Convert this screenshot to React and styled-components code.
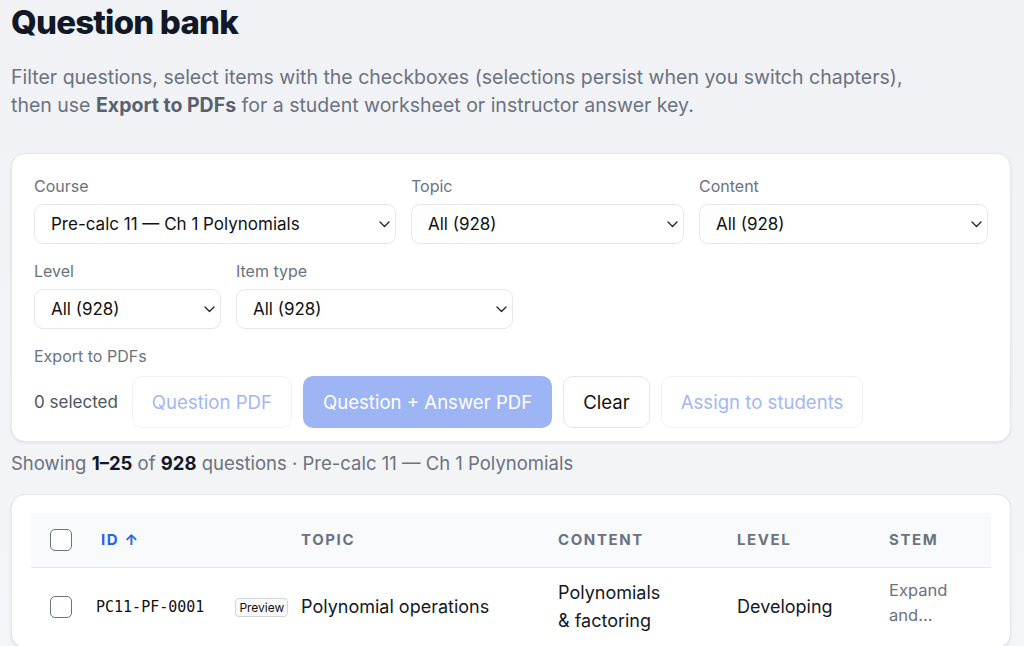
import React from "react";
import styled, { createGlobalStyle } from "styled-components";

const Global = createGlobalStyle`
  html, body { margin: 0; padding: 0; }
  body {
    background: linear-gradient(180deg, #f1f2f5 0%, #f4f5f7 100%);
    font-family: Inter, "Noto Sans", sans-serif;
    color: #111827;
    overflow: hidden;
    min-height: 646px;
  }
  * { box-sizing: border-box; }
`;

const Page = styled.div`
  padding: 0 13px 0 11px;
`;

const Title = styled.h1`
  margin: 0;
  padding-top: 2px;
  font-size: 33px;
  line-height: 40px;
  font-weight: 800;
  letter-spacing: -0.8px;
  color: #111827;
`;

const Intro = styled.p`
  margin: 21px 0 0;
  font-size: 19.5px;
  line-height: 28px;
  color: #6b7280;
  b { font-weight: 700; color: #596170; }
`;

const Card = styled.section`
  margin-top: ${(p) => p.$top || 0}px;
  background: #fff;
  border: 1px solid #e5e7eb;
  border-radius: 14px;
  box-shadow: 0 1px 3px rgba(17, 24, 39, 0.06), 0 1px 2px rgba(17, 24, 39, 0.03);
  padding: ${(p) => p.$pad};
`;

const FieldRow = styled.div`
  display: flex;
  gap: 15px;
  margin-bottom: 15px;
`;

const Field = styled.label`
  display: flex;
  flex-direction: column;
  gap: 6px;
  width: ${(p) => p.$w}px;
`;

const Label = styled.span`
  font-size: 16px;
  line-height: 24px;
  color: #6b7280;
`;

const SelectBox = styled.div`
  position: relative;
  height: 40px;
  border: 1px solid #e5e7eb;
  border-radius: 9px;
  background: #fff;
  display: flex;
  align-items: center;
  padding: 0 16px;
  font-size: 17px;
  color: #111;
`;

const Chevron = styled.svg`
  position: absolute;
  right: 5px;
  top: 50%;
  margin-top: -3px;
  width: 11px;
  height: 7px;
`;

const ExportRow = styled.div`
  display: flex;
  align-items: center;
  gap: 11px;
  margin-top: 8px;
`;

const Count = styled.span`
  font-size: 17px;
  color: #4b5563;
  margin-right: 3px;
`;

const Btn = styled.button`
  height: 52px;
  padding: 0 19px;
  border-radius: 10px;
  font-family: inherit;
  font-size: 18.6px;
  cursor: pointer;
  border: 1px solid ${(p) => (p.$primary ? "transparent" : p.$disabled ? "#eef0f3" : "#e5e7eb")};
  background: ${(p) => (p.$primary ? "#9db5f5" : "#fff")};
  color: ${(p) => (p.$primary ? "#fff" : p.$disabled ? "#a3b7f2" : "#111")};
`;

const Showing = styled.p`
  margin: 9px 0 0;
  font-size: 18.5px;
  line-height: 24px;
  color: #6b7280;
  b { color: #111827; font-weight: 700; }
`;

const Table = styled.table`
  width: 100%;
  border-collapse: collapse;
  table-layout: fixed;
`;

const Th = styled.th`
  background: #f9fafb;
  height: 54px;
  text-align: left;
  font-size: 15px;
  font-weight: 700;
  letter-spacing: 1.6px;
  text-transform: uppercase;
  color: ${(p) => (p.$active ? "#2563eb" : "#6b7280")};
  padding: 0 12px 0 ${(p) => p.$pl || 12}px;
  border-bottom: 1px solid #e5e7eb;
`;

const Td = styled.td`
  height: 79px;
  font-size: 18px;
  line-height: 28px;
  color: #111827;
  padding: 0 ${(p) => p.$pr || 12}px 0 ${(p) => p.$pl || 12}px;
  border-bottom: 1px solid #e5e7eb;
  vertical-align: middle;
  white-space: ${(p) => (p.$nowrap ? "nowrap" : "normal")};
`;

const Check = styled.span`
  display: block;
  width: 22px;
  height: 22px;
  border: 1.5px solid #6b7280;
  border-radius: 5px;
  background: #fff;
`;

const Mono = styled.span`
  font-family: "DejaVu Sans Mono", "Liberation Mono", monospace;
  font-size: 15px;
  color: #111;
  vertical-align: middle;
`;

const Badge = styled.span`
  display: inline-block;
  margin-left: 31px;
  padding: 1px 3px;
  font-size: 12px;
  line-height: 15px;
  border: 1px solid #d1d5db;
  border-radius: 4px;
  background: #f9fafb;
  color: #111;
  vertical-align: middle;
`;

const Stem = styled.span`
  display: -webkit-box;
  -webkit-line-clamp: 2;
  -webkit-box-orient: vertical;
  overflow: hidden;
  font-size: 16.5px;
  line-height: 25px;
  color: #6b7280;
  width: 74px;
  margin-bottom: 7px;
`;

const Chev = () => (
  <Chevron viewBox="0 0 11 7" fill="none">
    <path d="M1 1l4.5 4.5L10 1" stroke="#222" strokeWidth="1.3" strokeLinecap="round" strokeLinejoin="round" />
  </Chevron>
);

const Select = ({ w, label, value }) => (
  <Field $w={w}>
    <Label>{label}</Label>
    <SelectBox>
      {value}
      <Chev />
    </SelectBox>
  </Field>
);

export default function App() {
  return (
    <Page>
      <Global />
      <Title>Question bank</Title>
      <Intro>
        Filter questions, select items with the checkboxes (selections persist when you switch chapters),
        <br />
        then use <b>Export to PDFs</b> for a student worksheet or instructor answer key.
      </Intro>

      <Card $top={34} $pad="20px 22px 13px">
        <FieldRow>
          <Select w={362} label="Course" value="Pre-calc 11 — Ch 1 Polynomials" />
          <Select w={273} label="Topic" value="All (928)" />
          <Select w={289} label="Content" value="All (928)" />
        </FieldRow>
        <FieldRow>
          <Select w={187} label="Level" value="All (928)" />
          <Select w={277} label="Item type" value="All (928)" />
        </FieldRow>
        <Label>Export to PDFs</Label>
        <ExportRow>
          <Count>0 selected</Count>
          <Btn $disabled>Question PDF</Btn>
          <Btn $primary>Question + Answer PDF</Btn>
          <Btn>Clear</Btn>
          <Btn $disabled>Assign to students</Btn>
        </ExportRow>
      </Card>

      <Showing>
        Showing <b>1–25</b> of <b>928</b> questions · Pre-calc 11 — Ch 1 Polynomials
      </Showing>

      <Card $top={19} $pad="18px 19px 0">
        <Table>
          <colgroup>
            <col style={{ width: 53 }} />
            <col style={{ width: 205 }} />
            <col style={{ width: 257 }} />
            <col style={{ width: 179 }} />
            <col style={{ width: 152 }} />
            <col />
          </colgroup>
          <thead>
            <tr>
              <Th $pl={19}><Check /></Th>
              <Th $pl={17} $active>ID ↑</Th>
              <Th>Topic</Th>
              <Th>Content</Th>
              <Th>Level</Th>
              <Th>Stem</Th>
            </tr>
          </thead>
          <tbody>
            <tr>
              <Td $pl={19}><Check /></Td>
              <Td $nowrap><Mono>PC11-PF-0001</Mono><Badge>Preview</Badge></Td>
              <Td>Polynomial operations</Td>
              <Td $pr={60}>Polynomials &amp; factoring</Td>
              <Td>Developing</Td>
              <Td><Stem>Expand and simplify the expression</Stem></Td>
            </tr>
          </tbody>
        </Table>
      </Card>
    </Page>
  );
}
